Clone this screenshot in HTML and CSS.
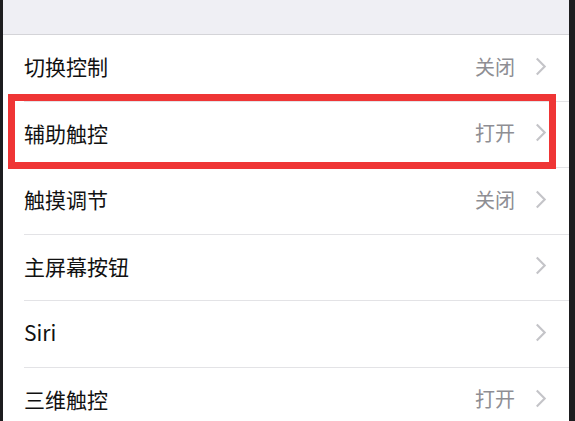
FILE: index.html
```html
<!DOCTYPE html>
<html lang="zh-CN">
<head>
    <meta charset="UTF-8">
    <meta name="viewport" content="width=device-width, initial-scale=1.0">
    <title>辅助功能</title>
    <link rel="stylesheet" href="styles.css">
</head>
<body>
    <div class="screen">
        <div class="header"></div>

        <ul class="list">
            <li class="row">
                <span class="label">切换控制</span>
                <span class="value">关闭</span>
                <svg class="chevron" viewBox="0 0 11 18"><polyline points="1.5,1.5 9,9 1.5,16.5"/></svg>
            </li>
            <li class="row highlighted">
                <span class="label">辅助触控</span>
                <span class="value">打开</span>
                <svg class="chevron" viewBox="0 0 11 18"><polyline points="1.5,1.5 9,9 1.5,16.5"/></svg>
                <!-- red annotation box over the row -->
                <div class="mark"></div>
            </li>
            <li class="row">
                <span class="label">触摸调节</span>
                <span class="value">关闭</span>
                <svg class="chevron" viewBox="0 0 11 18"><polyline points="1.5,1.5 9,9 1.5,16.5"/></svg>
            </li>
            <li class="row">
                <span class="label">主屏幕按钮</span>
                <span class="value"></span>
                <svg class="chevron" viewBox="0 0 11 18"><polyline points="1.5,1.5 9,9 1.5,16.5"/></svg>
            </li>
            <li class="row">
                <span class="label">Siri</span>
                <span class="value"></span>
                <svg class="chevron" viewBox="0 0 11 18"><polyline points="1.5,1.5 9,9 1.5,16.5"/></svg>
            </li>
            <li class="row">
                <span class="label">三维触控</span>
                <span class="value">打开</span>
                <svg class="chevron" viewBox="0 0 11 18"><polyline points="1.5,1.5 9,9 1.5,16.5"/></svg>
            </li>
        </ul>
    </div>
</body>
</html>
```

FILE: styles.css
```css
/* dark frame around the phone screen */
body {
    margin: 0;
    background: #1d1d1f;
    height: 421px;
    overflow: hidden;
    font-family: "Noto Sans CJK SC", "Noto Sans", sans-serif;
}

.screen {
    margin-left: 3px;
    width: 566px;
    min-height: 421px;
    background: #fff;
}

/* grey strip at the top */
.header {
    height: 34px;
    background: #efeff4;
    border-bottom: 1px solid #d4d4d8;
}

.list {
    list-style: none;
    margin: 0;
    padding: 0;
}

.row {
    position: relative;
    display: flex;
    align-items: center;
    height: 66px;
    box-sizing: border-box;
    height: 66.5px;
    margin-left: 21px;
    padding-right: 22px;
    padding-bottom: 3px;
    border-bottom: 1px solid #e3e3e6;
}

.label {
    flex: 1;
    font-size: 21px;
    color: #111;
}

.value {
    font-size: 20px;
    color: #8e8e93;
    margin-right: 20px;
}

.chevron {
    width: 12px;
    height: 19px;
    fill: none;
    stroke: #c4c4c8;
    stroke-width: 2;
}

/* annotation drawn over the row */
.mark {
    position: absolute;
    left: -16px;
    right: 13px;
    top: -8px;
    bottom: -2px;
    border: 7px solid #ef3535;
}
```
